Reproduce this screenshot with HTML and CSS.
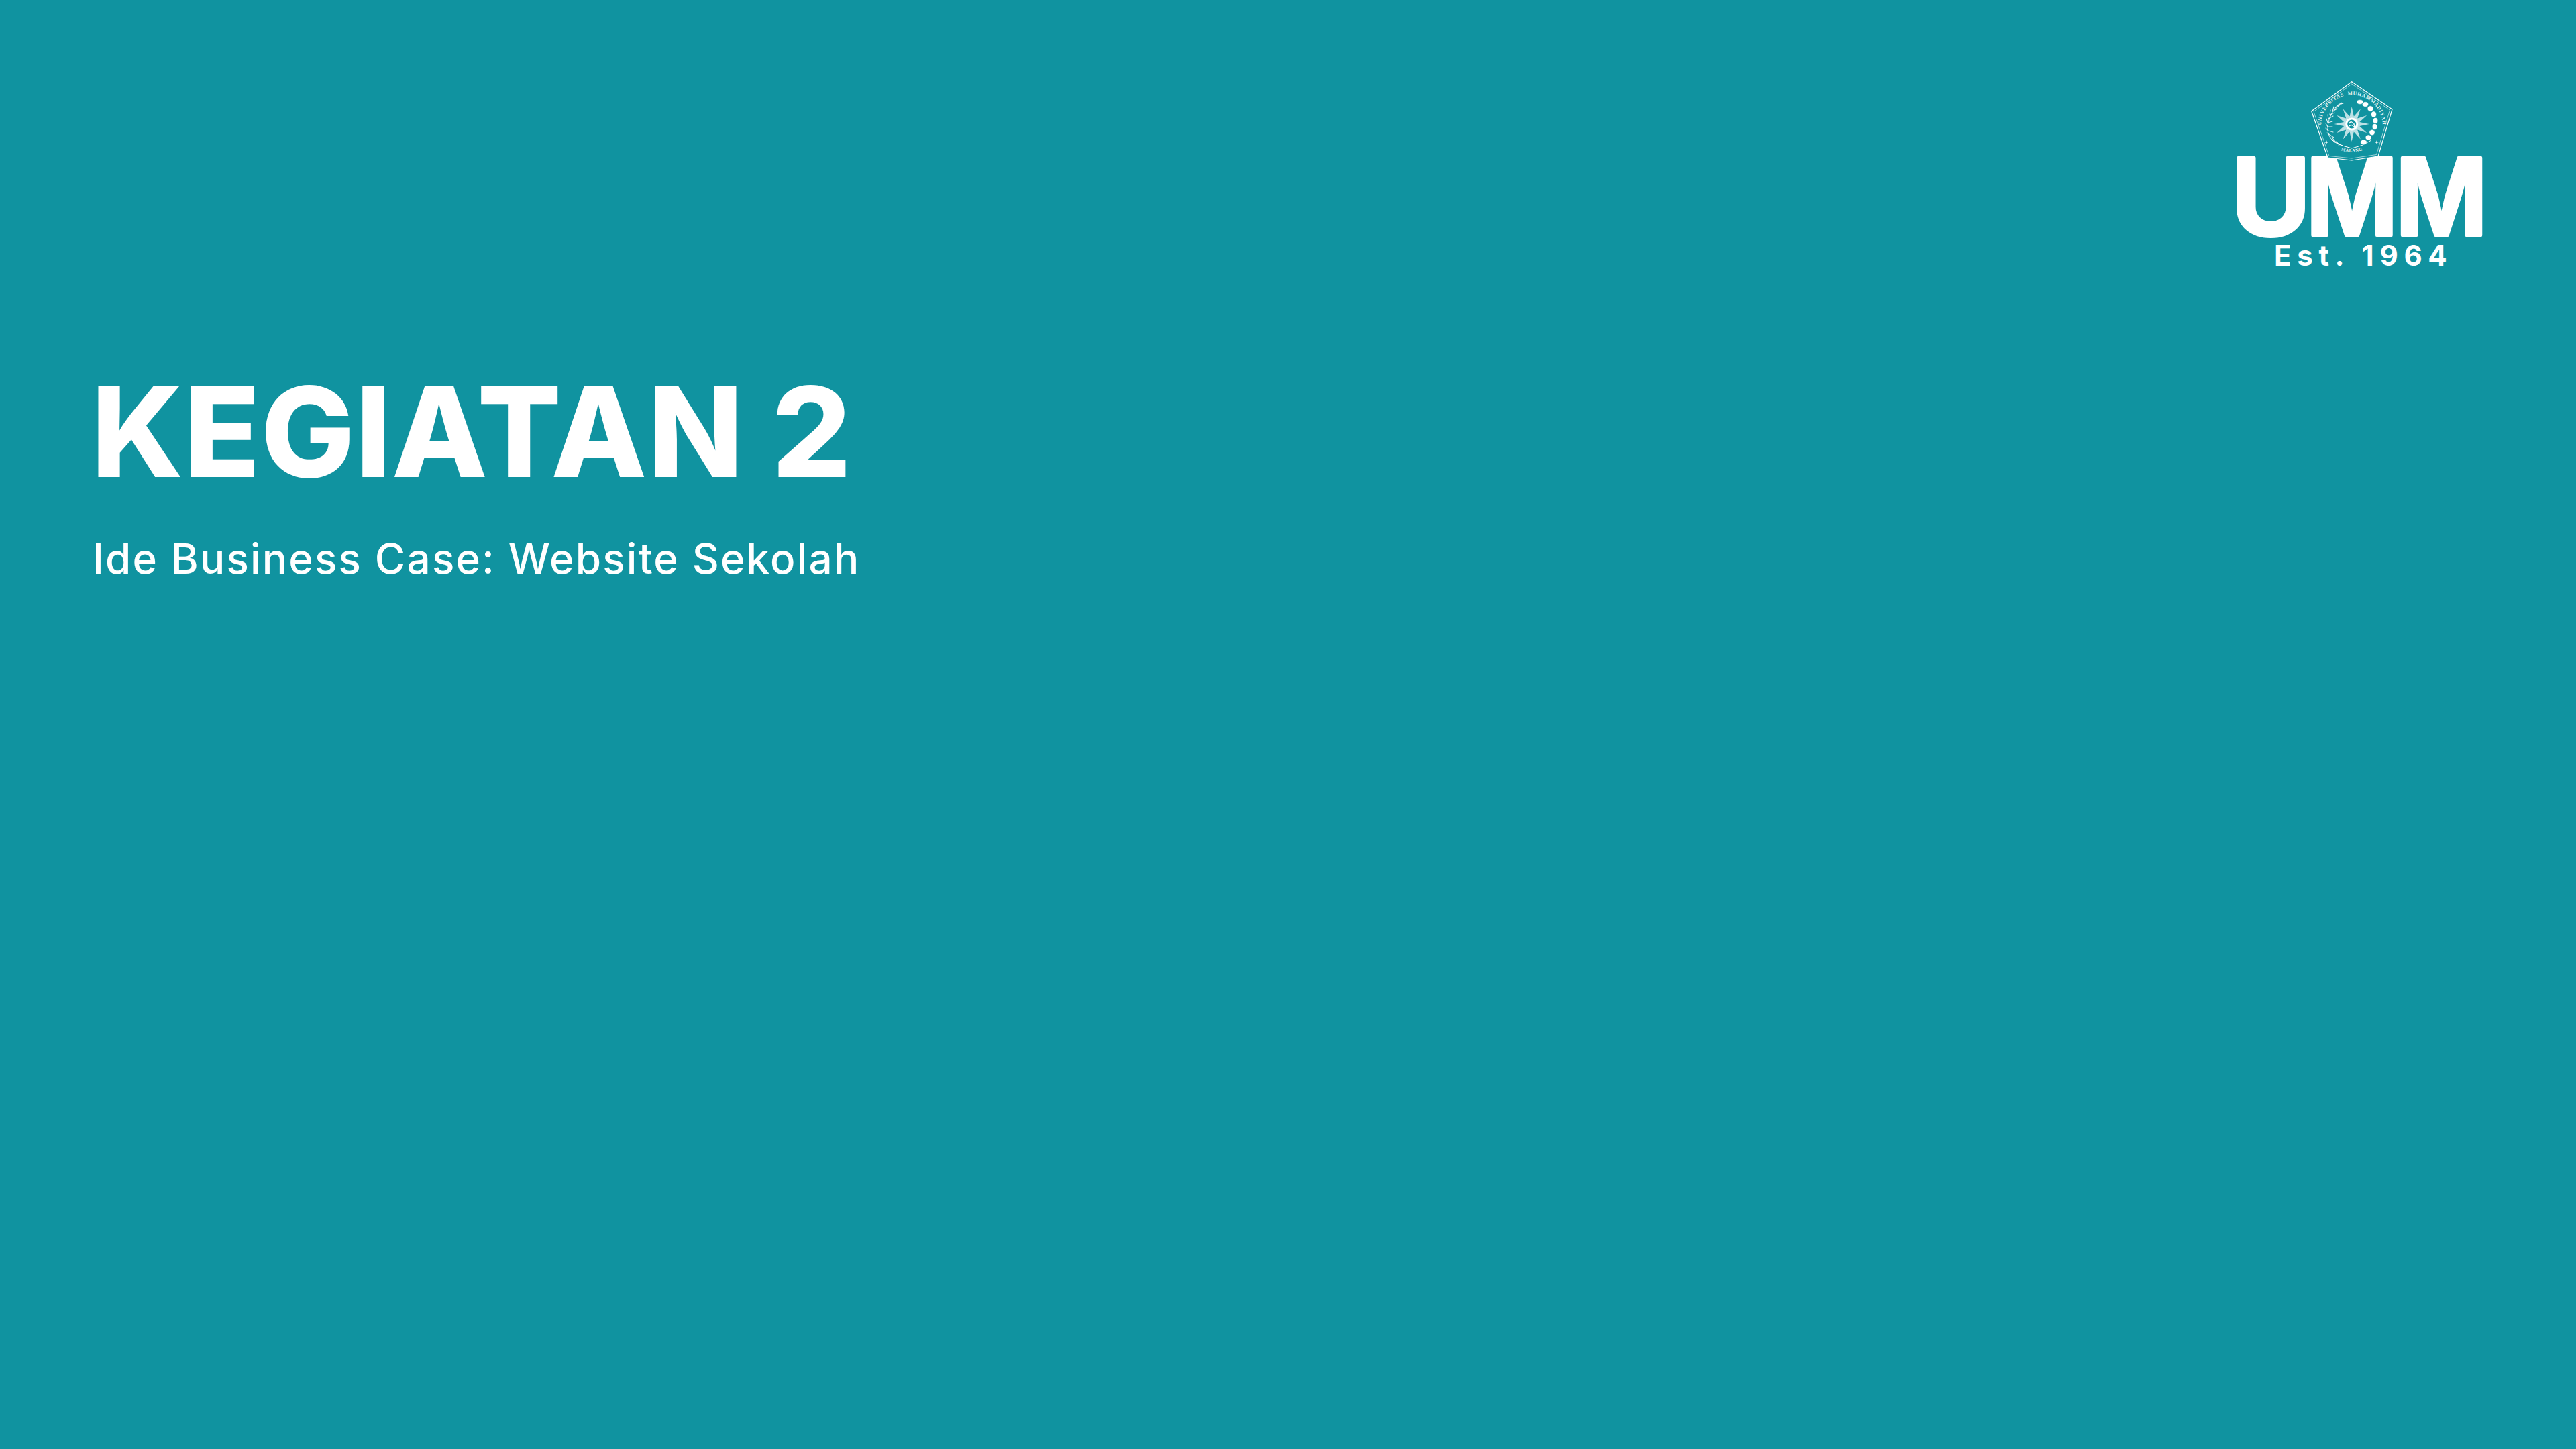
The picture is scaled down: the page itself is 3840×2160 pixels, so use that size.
FILE: index.html
```html
<!DOCTYPE html>
<html lang="id">
<head>
<meta charset="utf-8">
<title>Kegiatan 2</title>
<link rel="stylesheet" href="styles.css">
</head>
<body>
<main class="slide">
  <header class="brand">
    <svg class="logo" viewBox="3310 100 410 310" width="410" height="310" role="img" aria-label="UMM Est. 1964">
      <defs>
        <path id="arc-top" d="M3461 197A46 46 0 1 1 3551 197"/>
        <path id="arc-bottom" d="M3484 222Q3506 231 3528 222"/>
        <g id="small-star">
          <path class="mini" d="M0-3 .8-.8 3 0 .8.8 0 3-.8.8-3 0-.8-.8Z"/>
        </g>
      </defs>
      <text class="wordmark" x="3325.5" y="351" textLength="119" lengthAdjust="spacingAndGlyphs">U</text>
      <text class="wordmark" x="3437.5" y="351" textLength="137" lengthAdjust="spacingAndGlyphs">M</text>
      <text class="wordmark" x="3571" y="351" textLength="137" lengthAdjust="spacingAndGlyphs">M</text>
      <text class="est" x="3390" y="396">Est. 1964</text>
      <path class="shield" d="M3505.7 121.7 3566 163 3545 233 3505.7 239 3470 235 3445.7 165.7Z"/>
      <path class="shield-in" d="M3505.7 125 3562.5 164 3542.5 230.5 3505.7 236 3472 232.5 3449 166.5Z"/>
      <path class="chevron" d="M3477 209 3490 216.5 3505.7 221 3521 216.5 3535 209"/>
      <text class="seal-text"><textPath href="#arc-top" startOffset="50%" text-anchor="middle">UNIVERSITAS  MUHAMMADIYAH</textPath></text>
      <text class="seal-small"><textPath href="#arc-bottom" startOffset="50%" text-anchor="middle">MALANG</textPath></text>
      <g transform="translate(3505.7 185)">
        <polygon class="sun" points="0,-26 3.1,-11.6 13,-22.5 8.5,-8.5 22.5,-13 11.6,-3.1 26,0 11.6,3.1 22.5,13 8.5,8.5 13,22.5 3.1,11.6 0,26 -3.1,11.6 -13,22.5 -8.5,8.5 -22.5,13 -11.6,3.1 -26,0 -11.6,-3.1 -22.5,-13 -8.5,-8.5 -13,-22.5 -3.1,-11.6"/>
        <circle class="sun-hub" r="9.5"/>
        <circle class="sun-ring" r="6.5"/>
        <path class="sun-script" d="M-4-1Q-1-5 1-2T4 0M-4 3Q0 0 2 3T4 2"/>
      </g>
      <g class="wreath">
        <path class="stem" d="M3493 153Q3472 165 3470 188T3493 217"/>
        <path class="leaves" d="M3489 155l4-1M3485 158l5-5M3481 161l6-6M3477 166l2-7M3477 166l7-4M3473 171l1-7M3473 171l7-3M3471 177l-1-6M3471 177l7-4M3470 183l-2-6M3470 183l7-2M3470 189l-3-5M3470 189l7 0M3471 195l-4-4M3471 195l7 2M3473 201l-4-3M3473 201l6 4M3477 206l-3-1M3477 206l5 6M3483 211l-3 1M3483 211l4 5M3489 215l-3 1"/>
      </g>
      <g class="beads">
        <ellipse cx="3518" cy="152" rx="4.6" ry="3.4"/>
        <ellipse cx="3526" cy="155.5" rx="4.6" ry="3.8"/>
        <ellipse cx="3533.5" cy="162" rx="4.4" ry="4.2"/>
        <ellipse cx="3538.5" cy="170.5" rx="4" ry="4.6"/>
        <ellipse cx="3541" cy="180" rx="3.8" ry="4.6"/>
        <ellipse cx="3540" cy="189" rx="3.8" ry="4.6"/>
        <ellipse cx="3536" cy="197.5" rx="4.2" ry="4.2"/>
        <ellipse cx="3530.5" cy="205" rx="4.4" ry="4"/>
        <ellipse cx="3523.5" cy="212" rx="4.8" ry="3.8"/>
      </g>
      <use href="#small-star" x="3468" y="212"/>
      <use href="#small-star" x="3543" y="212"/>
    </svg>
  </header>
  <section class="intro">
    <h1 class="title">KEGIATAN 2</h1>
    <p class="subtitle">Ide Business Case: Website Sekolah</p>
  </section>
</main>
</body>
</html>
```
FILE: styles.css
```css
* { box-sizing: border-box; }
html, body { margin: 0; padding: 0; }
body { background: #1093a0; }
.slide {
  width: 3840px;
  height: 2160px;
  background: #1093a0;
  color: #fff;
  display: flex;
  flex-direction: column;
  font-family: "Inter", "Noto Sans", sans-serif;
  overflow: hidden;
}
.brand {
  display: flex;
  justify-content: flex-end;
  padding: 100px 120px 0 0;
}
.logo { display: block; }
.shield { fill: #1093a0; stroke: #fff; stroke-width: 1.2; stroke-linejoin: round; }
.shield-in, .chevron { fill: none; stroke: #fff; }
.shield-in { stroke-width: .7; opacity: .85; }
.chevron { stroke-width: 1; }
.seal-text, .seal-small {
  font-family: "Liberation Serif", serif;
  font-weight: 700;
  fill: #fff;
}
.seal-text { font-size: 7.6px; letter-spacing: .75px; opacity: .9; white-space: pre; }
.seal-small { font-size: 6.6px; letter-spacing: .5px; opacity: .9; }
.sun { fill: #fff; opacity: .72; }
.sun-hub { fill: #fff; }
.sun-ring { fill: #1093a0; }
.sun-script { fill: none; stroke: #fff; stroke-width: 1.3; stroke-linecap: round; }
.stem { fill: none; stroke: #fff; stroke-width: .8; }
.leaves { fill: none; stroke: #fff; stroke-width: 1.1; stroke-linecap: round; opacity: .85; }
.beads ellipse { fill: #fff; stroke: #1093a0; stroke-width: .6; }
.mini { fill: #fff; }
.wordmark {
  font-family: "Inter", sans-serif;
  font-size: 160px;
  font-weight: 700;
  fill: #fff;
  stroke: #fff;
  stroke-width: 4px;
  stroke-linejoin: round;
}
.est {
  font-family: "Inter", sans-serif;
  font-size: 42px;
  font-weight: 700;
  letter-spacing: 8.7px;
  fill: #fff;
}
.intro {
  padding: 122px 0 0 136px;
}
.title {
  margin: 0;
  font-size: 186px;
  line-height: 224px;
  font-weight: 800;
  letter-spacing: 1px;
  white-space: nowrap;
}
.subtitle {
  margin: 39px 0 0 2px;
  font-size: 62px;
  line-height: 76px;
  font-weight: 500;
  letter-spacing: 2.2px;
  white-space: nowrap;
}
```
